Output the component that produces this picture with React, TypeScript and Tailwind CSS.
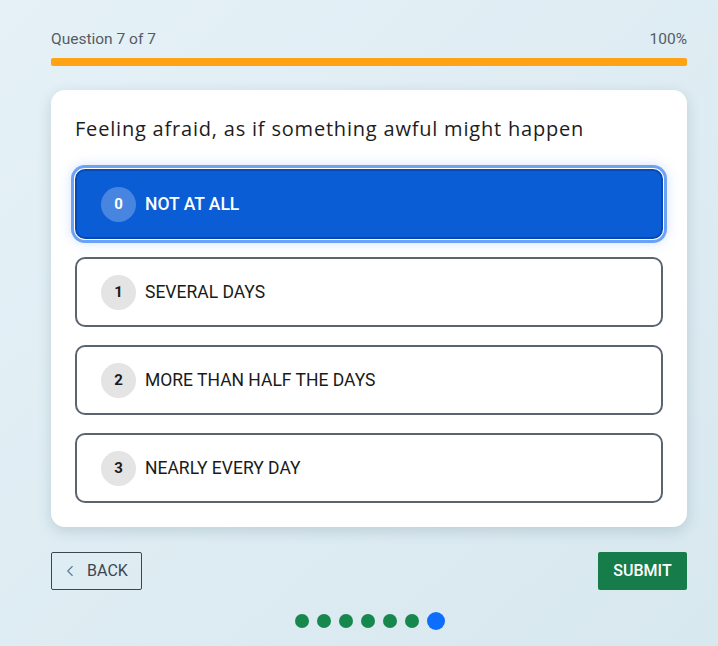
import { ChevronLeft } from 'lucide-react'

const options = [
  { value: 0, label: 'NOT AT ALL' },
  { value: 1, label: 'SEVERAL DAYS' },
  { value: 2, label: 'MORE THAN HALF THE DAYS' },
  { value: 3, label: 'NEARLY EVERY DAY' },
]

const selected = 0

export default function App() {
  return (
    <div className="min-h-[646px] w-full bg-gradient-to-br from-[#e5f1f7] to-[#d8e8ef] font-['Roboto',sans-serif]">
      <div className="ml-[51px] w-[636px] pt-[27px]">
        <div className="flex items-center justify-between text-[15.5px] leading-[24px] text-[#555c63]">
          <span>Question 7 of 7</span>
          <span>100%</span>
        </div>
        <div className="mt-[7px] h-[8px] w-full rounded-[2px] bg-[#ffa214]" />

        <div className="mt-[24px] rounded-[14px] bg-white px-6 pb-6 pt-[24px] shadow-[0_4px_14px_rgba(40,70,90,0.18)]">
          <h1 className="font-['Open_Sans',sans-serif] text-[20px] leading-[30px] tracking-[0.8px] text-[#1d1d1d]">
            Feeling afraid, as if something awful might happen
          </h1>
          <div className="mt-[25px] flex flex-col gap-[18px]">
            {options.map((o) => {
              const active = o.value === selected
              return (
                <button
                  key={o.value}
                  className={
                    active
                      ? 'flex h-[70px] items-center gap-[9px] rounded-[10px] border-2 border-[#0848b5] bg-[#0b5dd6] px-6 text-left text-white shadow-[0_0_0_1px_#ffffff,0_0_0_4px_#6aa3f6,0_0_12px_4px_rgba(80,140,240,0.25)]'
                      : 'flex h-[70px] items-center gap-[9px] rounded-[10px] border-2 border-[#5b6570] bg-white px-6 text-left text-[#1a1a1a]'
                  }
                >
                  <span
                    className={
                      active
                        ? 'flex h-[35px] w-[35px] items-center justify-center rounded-full bg-white/25 text-[15px] font-bold'
                        : 'flex h-[35px] w-[35px] items-center justify-center rounded-full bg-[#e4e4e4] text-[15px] font-bold'
                    }
                  >
                    {o.value}
                  </span>
                  <span className={active ? 'text-[17.5px] font-medium' : 'text-[17.5px]'}>{o.label}</span>
                </button>
              )
            })}
          </div>
        </div>

        <div className="mt-[25px] flex items-center justify-between">
          <button className="flex h-[38px] w-[91px] items-center justify-center gap-[8px] rounded-[2px] border border-[#3d4650] text-[16px] text-[#3d4650]">
            <ChevronLeft size={18} strokeWidth={1.5} className="-ml-1 text-[#5a7a9a]" />
            BACK
          </button>
          <button className="h-[38px] w-[89px] rounded-[2px] bg-[#167c4a] text-[16px] font-medium text-white">
            SUBMIT
          </button>
        </div>

        <div className="mt-[22px] flex items-center justify-center gap-[8px] pl-[2px]">
          {[0, 1, 2, 3, 4, 5].map((i) => (
            <span key={i} className="h-[14px] w-[14px] rounded-full bg-[#16884e]" />
          ))}
          <span className="h-[18px] w-[18px] rounded-full bg-[#0d6efd]" />
        </div>
      </div>
    </div>
  )
}
